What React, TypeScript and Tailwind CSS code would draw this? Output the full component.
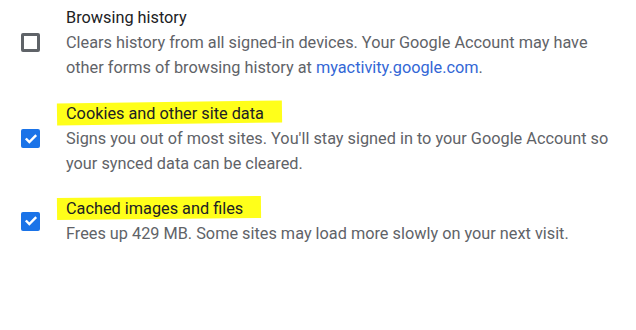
import React from "react";

type Item = {
  title: string;
  lines: React.ReactNode[];
  checked: boolean;
  marker?: string;
  rowClass: string;
};

const CheckBox = ({ checked }: { checked: boolean }) =>
  checked ? (
    <div className="w-[19px] h-[19px] rounded-[2px] bg-[#1a73e8] flex items-center justify-center">
      <svg viewBox="0 0 24 24" className="w-[16px] h-[16px]" fill="none">
        <path d="M5.5 12.5l4 4L18.5 7.5" stroke="white" strokeWidth="3.6" strokeLinecap="square" />
      </svg>
    </div>
  ) : (
    <div className="w-[19px] h-[19px] rounded-[2px] border-[3px] border-[#5f6368] bg-white" />
  );

const items: Item[] = [
  {
    title: "Browsing history",
    checked: false,
    rowClass: "pt-[5px]",
    lines: [
      "Clears history from all signed-in devices. Your Google Account may have",
      <>
        other forms of browsing history at{" "}
        <span className="text-[#3367d6]">myactivity.google.com</span>.
      </>,
    ],
  },
  {
    title: "Cookies and other site data",
    checked: true,
    marker: "w-[225px] -rotate-[0.8deg]",
    rowClass: "mt-[21px]",
    lines: [
      "Signs you out of most sites. You'll stay signed in to your Google Account so",
      "your synced data can be cleared.",
    ],
  },
  {
    title: "Cached images and files",
    checked: true,
    marker: "w-[204px] -rotate-[0.6deg]",
    rowClass: "mt-[20px]",
    lines: ["Frees up 429 MB. Some sites may load more slowly on your next visit."],
  },
];

export default function App() {
  return (
    <div
      className="w-[636px] h-[330px] bg-white overflow-hidden text-[16.3px] leading-[25px]"
      style={{ fontFamily: "Roboto, 'Liberation Sans', sans-serif" }}
    >
      {items.map((it) => (
        <div key={it.title} className={`flex items-center ${it.rowClass}`}>
          <div className="w-[66px] pl-[21px] shrink-0">
            <CheckBox checked={it.checked} />
          </div>
          <div className="flex flex-col">
            <div className="relative text-[#202124]">
              {it.marker && (
                <span
                  className={`absolute left-[-9px] top-[1px] h-[22px] bg-[#ffff1a] ${it.marker}`}
                />
              )}
              <span className="relative">{it.title}</span>
            </div>
            {it.lines.map((l, i) => (
              <div key={i} className="text-[#5f6368] whitespace-nowrap">
                {l}
              </div>
            ))}
          </div>
        </div>
      ))}
    </div>
  );
}
